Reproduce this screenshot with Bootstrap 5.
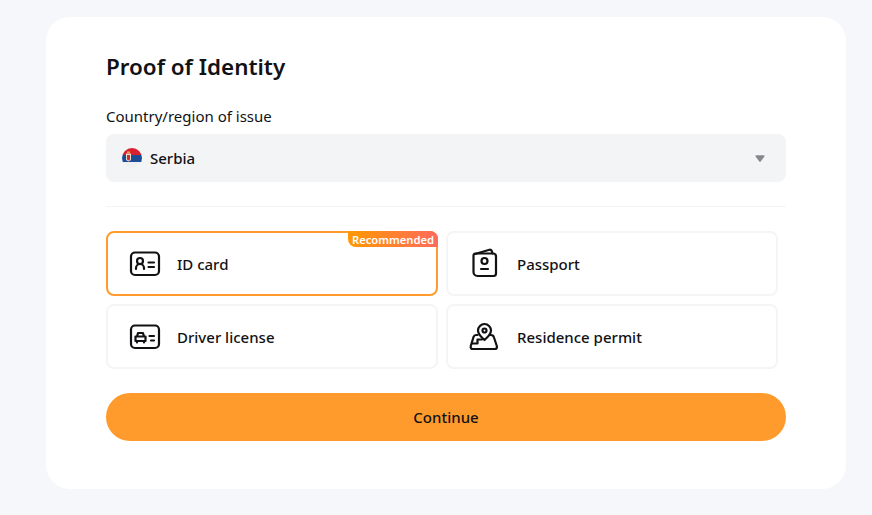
<!DOCTYPE html>
<html lang="en">
<head>
    <meta charset="UTF-8">
    <meta name="viewport" content="width=device-width, initial-scale=1.0">
    <title>Proof of Identity</title>
    <link href="https://cdn.jsdelivr.net/npm/bootstrap@5.3.0/dist/css/bootstrap.min.css" rel="stylesheet">
    <style>
        body {
            background-color: #f6f7fb;
            font-family: "Noto Sans", "Open Sans", sans-serif;
            color: #121214;
            padding: 17px 26px 26px 46px;
        }

        .kyc-panel {
            width: 800px;
            height: 472px;
            padding: 33px 60px 0;
            background-color: #fff;
            border-radius: 24px;
        }

        .kyc-title {
            font-size: 22.4px;
            line-height: 34px;
            font-weight: 600;
            margin-bottom: 22px;
        }

        .kyc-label {
            font-size: 15px;
            line-height: 20px;
            margin-bottom: 8px;
        }

        .country-select {
            height: 48px;
            padding: 0 21px 0 16px;
            background-color: #f3f4f6;
            border-radius: 8px;
            font-size: 15px;
            font-weight: 500;
        }

        .country-arrow {
            width: 10px;
            height: 9px;
        }

        .kyc-divider {
            margin: 24px 0;
            border-top: 1px solid #f3f4f6;
            opacity: 1;
        }

        .doc-grid {
            display: grid;
            grid-template-columns: 332px 332px;
            gap: 8px;
        }

        .doc-option {
            position: relative;
            height: 65px;
            padding-left: 21px;
            gap: 16px;
            border: 2px solid #f4f5f7;
            border-radius: 8px;
            font-size: 15px;
            font-weight: 500;
        }

        .doc-option > span:last-child {
            padding-top: 2px;
        }

        .doc-option.is-active {
            border-color: #ff9b2d;
        }

        .doc-tag {
            position: absolute;
            top: -2px;
            right: -2px;
            height: 16px;
            padding: 0 4px;
            background: linear-gradient(90deg, #ff9800, #ff6b5e);
            border-radius: 0 8px 0 8px;
            color: #fff;
            font-size: 11.2px;
            line-height: 17px;
            font-weight: 600;
        }

        .doc-icon {
            width: 32px;
            height: 32px;
            flex-shrink: 0;
            fill: none;
            stroke: #121214;
            stroke-width: 2.2;
            stroke-linecap: round;
            stroke-linejoin: round;
        }

        .btn-continue {
            width: 100%;
            height: 48px;
            margin-top: 24px;
            background-color: #ff9b2d;
            border: none;
            border-radius: 24px;
            color: #121214;
            font-size: 15px;
            font-weight: 500;
        }

        .btn-continue:hover {
            background-color: #f5901f;
            color: #121214;
        }
    </style>
</head>
<body>

<div class="kyc-panel">
    <h1 class="kyc-title">Proof of Identity</h1>
    <div class="kyc-label">Country/region of issue</div>
    <div class="country-select d-flex align-items-center justify-content-between">
        <div class="d-flex align-items-center gap-2">
            <svg width="20" height="20" viewBox="0 0 20 20">
                <defs>
                    <clipPath id="flagClip"><circle cx="10" cy="10" r="10"/></clipPath>
                </defs>
                <g clip-path="url(#flagClip)">
                    <rect width="20" height="7" fill="#d8202f"/>
                    <rect y="7" width="20" height="7" fill="#1c4c96"/>
                    <rect y="14" width="20" height="6" fill="#eef0f2"/>
                    <path d="M4 5.500h5V12l-2.500 1.500L4 12z" fill="#e9dcc8"/>
                    <path d="M5 7h3v4.500l-1.500 1-1.500-1z" fill="#c5303a"/>
                    <path d="M5 3.500h3v1.500H5z" fill="#e0a93c"/>
                </g>
            </svg>
            <span>Serbia</span>
        </div>
        <svg class="country-arrow" viewBox="0 0 12 10">
            <path d="M1.500 1h9a1 1 0 0 1 .8 1.600l-4.500 6a1 1 0 0 1-1.600 0l-4.500-6A1 1 0 0 1 1.500 1z" fill="#85878c"/>
        </svg>
    </div>
    <hr class="kyc-divider">
    <div class="doc-grid">
        <div class="doc-option is-active d-flex align-items-center">
            <span class="doc-tag">Recommended</span>
            <svg class="doc-icon" viewBox="0 0 32 32">
                <rect x="2" y="4.500" width="28" height="22.500" rx="4"/>
                <circle cx="11" cy="13" r="3"/>
                <path d="M7 21v-1a4 4 0 0 1 8 0v1M19.500 14.500h5.500M19.500 19h5.500"/>
            </svg>
            <span>ID card</span>
        </div>
        <div class="doc-option d-flex align-items-center">
            <svg class="doc-icon" viewBox="0 0 32 32">
                <path d="M6 6 20.500 1.800c1-.3 2 .3 2.300 1.300l.7 2.400"/>
                <path d="M4.500 7a2 2 0 0 1 2-1.500h17.500a3 3 0 0 1 3 3v17a2.500 2.500 0 0 1-2.500 2.500h-16a4 4 0 0 1-4-4z"/>
                <circle cx="15.500" cy="13" r="3"/>
                <path d="M12 21h7"/>
            </svg>
            <span>Passport</span>
        </div>
        <div class="doc-option d-flex align-items-center">
            <svg class="doc-icon" viewBox="0 0 32 32">
                <rect x="2" y="4.500" width="28" height="22.500" rx="4"/>
                <path d="M6.500 15.500h10v4.500h-10zM8 15.500l1-3.500h5l1 3.500M8 20v1.500M15 20v1.500M20.500 15h4.500M22 19.500h3"/>
            </svg>
            <span>Driver license</span>
        </div>
        <div class="doc-option d-flex align-items-center">
            <svg class="doc-icon" viewBox="0 0 32 32">
                <path d="M15.500 19c-3-3-6.500-5.500-6.500-9.500a6.500 6.500 0 0 1 13 0c0 4-3.500 6.500-6.500 9.500z"/>
                <circle cx="15.500" cy="9.500" r="2"/>
                <path d="M8.500 14H7c-1.300 0-2 .7-2.500 2L1.800 25c-.6 2 .5 3 2 3h22c1.600 0 2.600-1 2-3l-2.800-8.500c-.4-1.500-1.300-2.500-3-2.500h-1"/>
                <path d="M3.500 22.500h5v-4h4.500"/>
            </svg>
            <span>Residence permit</span>
        </div>
    </div>
    <button type="button" class="btn btn-continue">Continue</button>
</div>

<script src="https://cdn.jsdelivr.net/npm/bootstrap@5.3.0/dist/js/bootstrap.bundle.min.js"></script>
</body>
</html>
